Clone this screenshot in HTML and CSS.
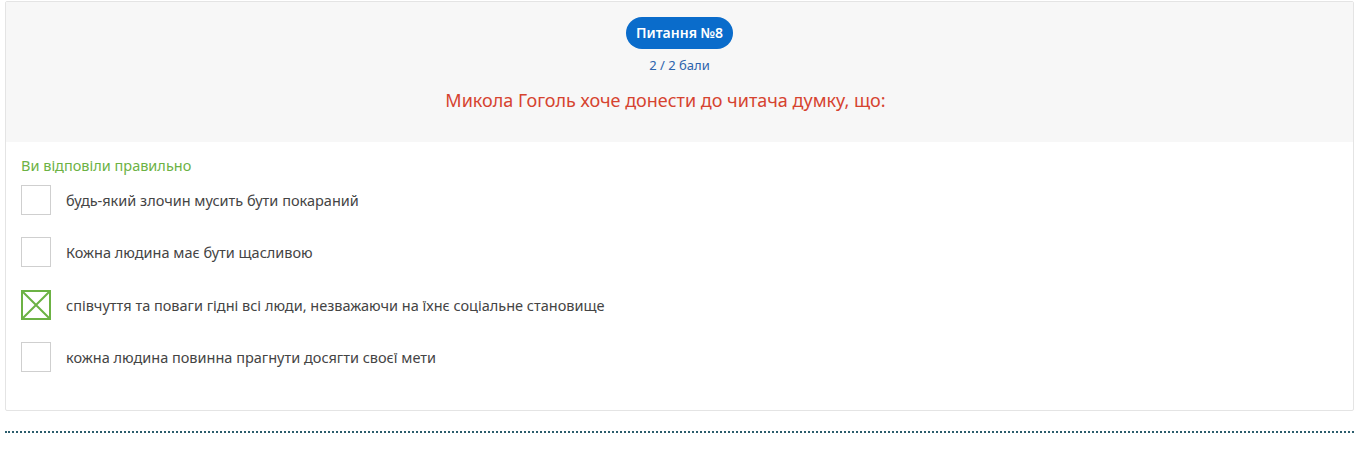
FILE: index.html
```html
<!DOCTYPE html>
<html lang="uk">
<head>
<meta charset="utf-8">
<link rel="stylesheet" href="styles.css">
</head>
<body>
<div class="page">
  <div class="card">
    <div class="card-head">
      <div class="pill">Питання №8</div>
      <div class="score">2 / 2 бали</div>
      <div class="question">Микола Гоголь хоче донести до читача думку, що:</div>
    </div>
    <div class="card-body">
      <div class="verdict">Ви відповіли правильно</div>
      <div class="answers">
        <div class="answer"><span class="box"></span><span class="label">будь-який злочин мусить бути покараний</span></div>
        <div class="answer"><span class="box"></span><span class="label">Кожна людина має бути щасливою</span></div>
        <div class="answer"><span class="box box-checked"><svg width="26" height="26" viewBox="0 0 26 26"><path d="M0 0 L26 26 M26 0 L0 26" stroke="#6cb244" stroke-width="2" fill="none"/></svg></span><span class="label">співчуття та поваги гідні всі люди, незважаючи на їхнє соціальне становище</span></div>
        <div class="answer"><span class="box"></span><span class="label">кожна людина повинна прагнути досягти своєї мети</span></div>
      </div>
    </div>
  </div>
  <div class="divider"></div>
</div>
</body>
</html>
```
FILE: styles.css
```css
* { box-sizing: border-box; }
body {
  margin: 0;
  background: #fff;
  font-family: "Noto Sans", "Open Sans", sans-serif;
}
.page {
  padding: 1px 12px 0 5px;
}
.card {
  border: 1px solid #e4e4e4;
  border-radius: 2px;
}
.card-head {
  background: #f7f7f7;
  height: 140px;
  display: flex;
  flex-direction: column;
  align-items: center;
  padding-top: 15px;
}
.pill {
  background: #0a6ccb;
  color: #fff;
  font-weight: 600;
  font-size: 14px;
  height: 32px;
  line-height: 32px;
  padding: 0 10px;
  border-radius: 16px;
}
.score {
  margin-top: 8px;
  font-size: 13px;
  color: #2d64ad;
  line-height: 16px;
}
.question {
  margin-top: 15px;
  padding-right: 28px;
  font-size: 18px;
  color: #d6432f;
  line-height: 24px;
}
.card-body {
  padding: 13px 15px 38px;
}
.verdict {
  color: #6cb244;
  font-size: 14.5px;
  line-height: 20px;
  margin-bottom: 10px;
}
.answers {
  display: flex;
  flex-direction: column;
  gap: 22.3px;
}
.answer {
  display: flex;
  align-items: center;
  gap: 15px;
}
.box {
  width: 30px;
  height: 30px;
  border: 1px solid #cfcfcf;
  flex: none;
  display: block;
}
.box-checked {
  border: 2px solid #6cb244;
}
.box-checked svg {
  display: block;
  width: 26px;
  height: 26px;
}
.label {
  font-size: 14.5px;
  color: #444;
}
.divider {
  margin-top: 20px;
  border-top: 2px dotted #2c5d6d;
}
```
